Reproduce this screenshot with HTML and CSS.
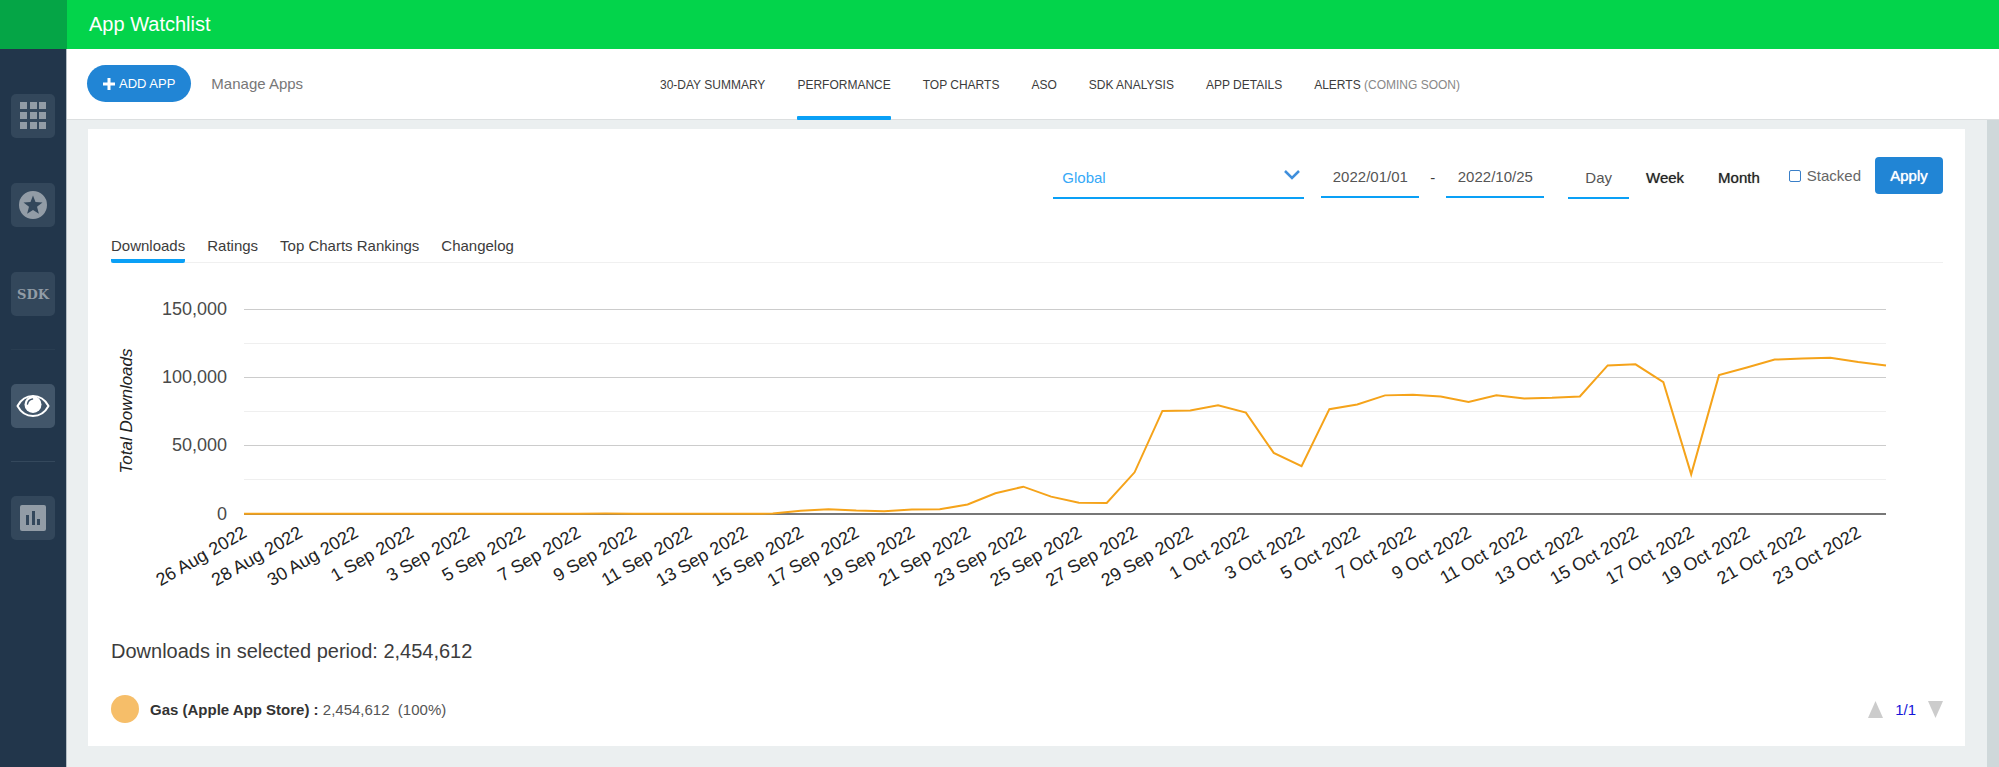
FILE: index.html
```html
<!DOCTYPE html>
<html lang="en">
  <head>
    <meta charset="UTF-8" />
    <meta name="viewport" content="width=device-width, initial-scale=1.0" />
    <title>App Watchlist</title>
    <link rel="stylesheet" href="styles.css">
  </head>
  <body>
    <div class="brand"></div>
    <header class="topbar">
      <h1>App Watchlist</h1>
    </header>

    <nav class="sidebar" aria-label="Main">
      <a href="#" class="side-link" aria-label="Apps">
        <svg width="28" height="28" viewBox="0 0 28 28" fill="currentColor">
          <path d="M1 0h7v7H1zM11 0h7v7h-7zM20 0h7v7h-7zM1 10h7v7H1zM11 10h7v7h-7zM20 10h7v7h-7zM1 20h7v7H1zM11 20h7v7h-7zM20 20h7v7h-7z" />
        </svg>
      </a>
      <a href="#" class="side-link" aria-label="Top charts">
        <svg width="28" height="28" viewBox="0 0 28 28" fill="currentColor">
          <path fill-rule="evenodd" d="M14 0a14 14 0 1 0 0 28a14 14 0 1 0 0-28zM14 4.500l2.500 6.500l7 .4l-5.500 4.400l1.900 6.900L14 18.900l-5.900 3.800l1.900-6.900l-5.500-4.400l7-.4z" />
        </svg>
      </a>
      <a href="#" class="side-link side-text">SDK</a>
      <hr class="faint" />
      <a href="#" class="side-link active" aria-label="Watchlist">
        <svg width="34" height="24" viewBox="0 0 34 24">
          <path d="M1.500 12C5 5.500 10.500 2 17 2s12 3.500 15.500 10C29 18.500 23.500 22 17 22S5 18.500 1.500 12z" fill="none" stroke="currentColor" stroke-width="2" stroke-linejoin="round" />
          <circle cx="17" cy="10.500" r="8.500" fill="currentColor" />
          <path d="M11.500 10a6 6 0 0 1 5-5" fill="none" stroke="#42566a" stroke-width="1.500" stroke-linecap="round" />
        </svg>
      </a>
      <hr />
      <a href="#" class="side-link" aria-label="Reports">
        <svg width="26" height="26" viewBox="0 0 26 26">
          <rect width="26" height="26" rx="2" fill="currentColor" />
          <path d="M6 10h3v10H6zM12 6h3v14h-3zM17 14h3v6h-3z" fill="#33475b" />
        </svg>
      </a>
    </nav>

    <main>
      <div class="toolbar">
        <div class="toolbar-left">
          <button class="add-app">
            <svg width="12" height="12" viewBox="0 0 12 12"><path d="M6 0v12M0 6h12" stroke="#fff" stroke-width="3" /></svg>
            ADD APP
          </button>
          <a href="#" class="manage">Manage Apps</a>
        </div>
        <nav class="main-tabs" aria-label="Sections">
          <a href="#">30-DAY SUMMARY</a>
          <a href="#" class="active">PERFORMANCE</a>
          <a href="#">TOP CHARTS</a>
          <a href="#">ASO</a>
          <a href="#">SDK ANALYSIS</a>
          <a href="#">APP DETAILS</a>
          <a href="#">ALERTS <span>(COMING SOON)</span></a>
        </nav>
      </div>

      <div class="content">
        <section class="card">
          <form class="filters">
            <div class="select-wrap">
              <select aria-label="Country">
                <option>Global</option>
              </select>
              <svg class="chevron" width="16" height="10" viewBox="0 0 16 10"><path d="M1 1l7 7l7-7" fill="none" stroke="#3f8fdc" stroke-width="2.500" /></svg>
            </div>
            <div class="dates">
              <input type="text" value="2022/01/01" aria-label="From" />
              <span>-</span>
              <input type="text" value="2022/10/25" aria-label="To" />
            </div>
            <div class="periods">
              <button type="button" class="active">Day</button>
              <button type="button">Week</button>
              <button type="button">Month</button>
            </div>
            <label class="stacked" for="stacked"><input type="checkbox" id="stacked" />Stacked</label>
            <button type="button" class="apply">Apply</button>
          </form>

          <nav class="sub-tabs" aria-label="Metrics">
            <a href="#" class="active">Downloads</a>
            <a href="#">Ratings</a>
            <a href="#">Top Charts Rankings</a>
            <a href="#">Changelog</a>
          </nav>

          <svg class="chart" id="chart" viewBox="0 0 1832 340" role="img" aria-label="Total downloads per day"></svg>

          <h2>Downloads in selected period: 2,454,612</h2>

          <div class="legend">
            <span class="dot"></span>
            <p><strong>Gas (Apple App Store) :</strong> 2,454,612&nbsp; (100%)</p>
            <div class="pager">
              <button aria-label="Previous"><svg width="15" height="17" viewBox="0 0 15 17"><path d="M7.500 0L15 17H0z" fill="#ccc" /></svg></button>
              <span>1/1</span>
              <button aria-label="Next"><svg width="15" height="17" viewBox="0 0 15 17"><path d="M0 0h15L7.500 17z" fill="#ccc" /></svg></button>
            </div>
          </div>
        </section>
        <div class="scrollbar"></div>
      </div>
    </main>

    <script>
      // daily downloads, 26 Aug - 24 Oct 2022
      const downloads = [
        150, 150, 150, 150, 150, 150, 150, 150, 150, 150, 150, 200, 200, 300, 200,
        150, 150, 150, 150, 300, 2300, 3500, 2500, 2000, 3300, 3400, 7000, 15200,
        20000, 12700, 8200, 8100, 30500, 75400, 75800, 79600, 74200, 44700, 35000,
        76700, 80100, 86800, 87300, 86000, 82000, 86800, 84500, 85000, 86000,
        108700, 109500, 96500, 29000, 101600, 107200, 113000, 113700, 114400,
        111300, 108700,
      ];

      const left = 133;
      const right = 1775;
      const base = 251;
      const scale = 205 / 150000;
      const step = (right - left) / (downloads.length - 1);
      let out = "";

      for (let v = 0; v <= 150000; v += 25000) {
        const y = Math.floor(base - v * scale);
        const major = v % 50000 === 0;
        const cls = v === 0 ? "axis" : major ? "major" : "minor";
        out += `<path class="${cls}" d="M${left} ${y}H${right}" />`;
        if (major) {
          out += `<text class="tick" x="116" y="${y + 6}" text-anchor="end">${v.toLocaleString("en-US")}</text>`;
        }
      }

      const points = downloads.map((v, i) => `${left + i * step},${base - v * scale}`);
      out += `<polyline class="line" points="${points.join(" ")}" />`;

      const months = ["Aug", "Sep", "Oct"];
      for (let i = 0; i < downloads.length; i += 2) {
        const d = new Date(2022, 7, 26 + i);
        const label = `${d.getDate()} ${months[d.getMonth() - 7]} 2022`;
        const x = left + i * step + 4;
        out += `<text class="date" text-anchor="end" transform="translate(${x} 273) rotate(-30)">${label}</text>`;
      }

      out += `<text class="axis-title" text-anchor="middle" transform="translate(21 148) rotate(-90)">Total Downloads</text>`;
      document.getElementById("chart").innerHTML = out;
    </script>
  </body>
</html>
```
FILE: styles.css
```css
:root {
  --green: #03d44b;
  --green-dark: #05a546;
  --navy: #22364b;
  --tile: #33475b;
  --blue: #2185d5;
  --accent: #0aa0f6;
  --bg: #ebeff0;
  --text: #3c3c3c;
}

* {
  box-sizing: border-box;
}

body {
  margin: 0;
  min-height: 100vh;
  display: grid;
  grid-template-columns: 67px 1fr;
  grid-template-rows: 49px 1fr;
  font-family: "Liberation Sans", Arial, sans-serif;
  font-size: 15px;
  color: var(--text);
  background: var(--bg);
}

a {
  color: inherit;
  text-decoration: none;
}

button,
input,
select {
  font: inherit;
  color: inherit;
  background: none;
  border: none;
  border-radius: 0;
  padding: 0;
  margin: 0;
}

button {
  cursor: pointer;
}

.brand {
  background: var(--green-dark);
}

.topbar {
  background: var(--green);
  display: flex;
  align-items: center;
  padding: 0 22px;
}

.topbar h1 {
  margin: 0;
  font-size: 20px;
  font-weight: normal;
  color: #fff;
}

.sidebar {
  background: var(--navy);
  border-right: 1px solid #b4bdc4;
  padding-top: 45px;
  display: flex;
  flex-direction: column;
  align-items: center;
}

.side-link {
  width: 44px;
  height: 44px;
  border-radius: 5px;
  background: var(--tile);
  color: #929ca6;
  display: flex;
  align-items: center;
  justify-content: center;
}

.side-link + .side-link {
  margin-top: 45px;
}

.side-link.active {
  background: #42566a;
  color: #fff;
}

.side-text {
  font-family: "DejaVu Serif", serif;
  font-weight: bold;
  font-size: 13px;
}

.sidebar hr {
  width: 44px;
  margin: 33px 0 34px;
  border: none;
  border-top: 1px solid #34485c;
}

.sidebar hr.faint {
  border-color: #293d51;
}

main {
  display: flex;
  flex-direction: column;
  min-width: 0;
}

.toolbar {
  height: 71px;
  background: #fff;
  border-bottom: 1px solid #dcdfe0;
  padding-left: 20px;
  display: grid;
  grid-template-columns: 1fr auto 1fr;
}

.toolbar-left {
  display: flex;
  align-items: center;
  gap: 20px;
  padding-bottom: 2px;
}

.add-app {
  height: 37px;
  padding: 0 16px;
  border-radius: 19px;
  background: var(--blue);
  color: #fff;
  font-size: 13px;
  display: flex;
  align-items: center;
  gap: 4px;
}

.manage {
  color: #777;
}

.main-tabs {
  display: flex;
  gap: 32px;
  padding-left: 34px;
  font-size: 12px;
  white-space: nowrap;
}

.main-tabs a {
  height: 71px;
  line-height: 73px;
}

.main-tabs a.active {
  position: relative;
}

.main-tabs a.active::after {
  content: "";
  position: absolute;
  left: 0;
  right: 0;
  bottom: 0;
  height: 4px;
  border-radius: 1px;
  background: var(--accent);
}

.main-tabs span {
  color: #888;
}

.content {
  flex: 1;
  display: flex;
  gap: 22px;
  padding-left: 21px;
}

.card {
  flex: 1;
  min-width: 0;
  background: #fff;
  margin: 9px 0 21px;
  padding: 28px 22px 23px 23px;
}

.scrollbar {
  width: 12px;
  background: #cfd8da;
}

.filters {
  display: flex;
  justify-content: flex-end;
  align-items: flex-start;
}

.select-wrap {
  position: relative;
  width: 251px;
  margin-right: 17px;
}

.select-wrap select {
  appearance: none;
  width: 100%;
  height: 42px;
  padding-left: 9px;
  color: #36a9f7;
  border-bottom: 2px solid var(--accent);
}

.chevron {
  position: absolute;
  right: 4px;
  top: 13px;
  pointer-events: none;
}

.dates {
  display: flex;
  align-items: center;
  gap: 11px;
  margin-right: 24px;
}

.dates input {
  width: 98px;
  height: 41px;
  text-align: center;
  color: #555;
  border-bottom: 2px solid var(--accent);
}

.periods {
  display: flex;
  margin-right: 12px;
}

.periods button {
  height: 42px;
  padding: 0 17px;
  border-bottom: 2px solid transparent;
  color: #222;
  text-shadow: 0 0 1px #777;
}

.periods button.active {
  color: #555;
  text-shadow: none;
  border-color: var(--accent);
}

.stacked {
  height: 37px;
  display: flex;
  align-items: center;
  gap: 6px;
  margin-right: 14px;
  color: #666;
}

.stacked input {
  appearance: none;
  width: 12px;
  height: 12px;
  border: 1px solid #3a7fc8;
  border-radius: 2px;
}

.apply {
  width: 68px;
  height: 37px;
  border-radius: 4px;
  background: var(--blue);
  color: #fff;
  text-shadow: 0 0 1px #fff;
}

.sub-tabs {
  display: flex;
  gap: 22px;
  margin-top: 37px;
  height: 27px;
  border-bottom: 1px solid #f0f0f0;
}

.sub-tabs a {
  height: 27px;
  line-height: 20px;
}

.sub-tabs a.active {
  border-bottom: 4px solid var(--accent);
  border-radius: 2px;
}

.chart {
  display: block;
  width: 100%;
  font-size: 18px;
}

.chart path {
  fill: none;
  stroke-width: 1;
  shape-rendering: crispEdges;
}

.chart .major {
  stroke: #ccc;
}

.chart .minor {
  stroke: #efefef;
}

.chart .axis {
  stroke: #777;
  stroke-width: 2;
}

.chart .line {
  fill: none;
  stroke: #f5a31a;
  stroke-width: 2;
}

.chart .tick {
  fill: #4a4a4a;
}

.chart .date,
.chart .axis-title {
  fill: #222;
}

.chart .axis-title {
  font-size: 17px;
  font-style: italic;
}

h2 {
  margin: 36px 0 32px;
  font-size: 20px;
  line-height: 24px;
  font-weight: normal;
}

.legend {
  display: flex;
  align-items: center;
  gap: 11px;
}

.legend p {
  margin: 0;
  color: #555;
}

.legend strong {
  color: #333;
}

.dot {
  width: 28px;
  height: 28px;
  border-radius: 50%;
  background: #f6be69;
}

.pager {
  margin-left: auto;
  display: flex;
  align-items: center;
  gap: 12px;
  color: #1515d8;
}

.pager svg {
  display: block;
}
```
